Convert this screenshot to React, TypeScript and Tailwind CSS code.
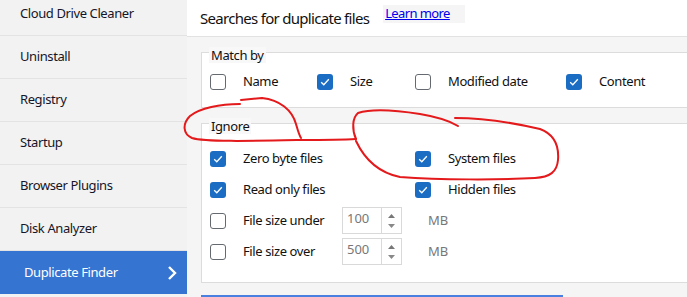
import React from "react";

const FONT = { fontFamily: '"Noto Sans", "Open Sans", sans-serif' };

function Check({ checked }: { checked: boolean }) {
  if (checked) {
    return (
      <div className="w-4 h-4 rounded-[3px] bg-[#1b6dc3] flex items-center justify-center shrink-0">
        <svg width="12" height="12" viewBox="0 0 12 12">
          <polyline points="2.2,6.2 4.8,8.8 9.8,3.2" fill="none" stroke="white" strokeWidth="1.3" />
        </svg>
      </div>
    );
  }
  return <div className="w-4 h-4 rounded-[3px] border-[1.5px] border-[#656a70] bg-white shrink-0" />;
}

function Item({ checked, label, w }: { checked: boolean; label: string; w: string }) {
  return (
    <div className={`flex items-center ${w}`}>
      <Check checked={checked} />
      <span className="ml-[17px] text-[13px] tracking-[-0.4px] text-[#111]">{label}</span>
    </div>
  );
}

function Spin({ value }: { value: string }) {
  return (
    <div className="flex h-[27px] w-[60px] border border-[#d9d9d9] bg-white">
      <div className="flex-1 pl-[4px] pt-[2px] text-[13px] leading-[16px] text-[#777]">{value}</div>
      <div className="w-[20px] border-l border-[#d9d9d9] flex flex-col items-center justify-center gap-[6px]">
        <svg width="7" height="4" viewBox="0 0 7 4"><polygon points="0,4 7,4 3.5,0" fill="#777" /></svg>
        <svg width="7" height="4" viewBox="0 0 7 4"><polygon points="0,0 7,0 3.5,4" fill="#888" /></svg>
      </div>
    </div>
  );
}

const sidebar = [
  "Cloud Drive Cleaner",
  "Uninstall",
  "Registry",
  "Startup",
  "Browser Plugins",
  "Disk Analyzer",
];

export default function App() {
  return (
    <div className="relative w-[687px] h-[297px] overflow-hidden flex bg-[#f5f5f5]" style={FONT}>
      <div className="w-[187px] shrink-0 bg-[#f2f2f2] flex flex-col -mt-[7px]">
        {sidebar.map((s) => (
          <div key={s} className="h-[43px] shrink-0 border-b border-[#e3e3e3] flex items-center pl-[20px] text-[13px] tracking-[-0.4px] text-[#15152a]">
            {s}
          </div>
        ))}
        <div className="h-[43px] shrink-0 bg-[#3574d0] flex items-center pl-[24px] pr-[9px] text-[13px] tracking-[-0.4px] text-white justify-between">
          <span>Duplicate Finder</span>
          <svg width="12" height="16" viewBox="0 0 12 16">
            <polyline points="3,2 9,8 3,14" fill="none" stroke="white" strokeWidth="2.4" />
          </svg>
        </div>
      </div>
      <div className="flex-1 flex flex-col min-w-0">
        <div className="h-[37px] shrink-0 bg-white border-b border-[#e2e2e2] flex items-center pl-[13px]">
          <span className="text-[15px] tracking-[-0.7px] text-[#111]">Searches for duplicate files</span>
          <span className="ml-[14px] mb-[9px] bg-[#f5f5f5] pl-[2px] pr-[15px] h-[18px] flex items-center text-[13px] tracking-[-0.6px] text-[#0000ee] underline">
            Learn more
          </span>
        </div>
        <div className="pl-[14px] pt-[15px] flex flex-col">
          <div className="relative w-[495px] h-[56px] border border-[#dcdcdc] bg-white pl-[8px] pt-[19px]">
            <span className="absolute left-[7px] -top-[6px] px-[2px] bg-[#f8f8f8] text-[13px] tracking-[-0.4px] leading-[16px] text-[#111]">Match by</span>
            <div className="flex">
              <Item checked={false} label="Name" w="w-[107px]" />
              <Item checked={true} label="Size" w="w-[98px]" />
              <Item checked={false} label="Modified date" w="w-[151px]" />
              <Item checked={true} label="Content" w="w-[100px]" />
            </div>
          </div>
          <div className="relative mt-[15px] w-[495px] h-[160px] border border-[#dcdcdc] bg-white pl-[8px] pt-[19px]">
            <span className="absolute left-[7px] -top-[6px] px-[2px] bg-[#f8f8f8] text-[13px] tracking-[-0.4px] leading-[16px] text-[#111]">Ignore</span>
            <div className="grid grid-cols-[205px_1fr] auto-rows-[31px]">
              <Item checked={true} label="Zero byte files" w="" />
              <Item checked={true} label="System files" w="" />
              <Item checked={true} label="Read only files" w="" />
              <Item checked={true} label="Hidden files" w="" />
              <div className="col-span-2 flex items-center">
                <div className="w-[132px] flex items-center"><Check checked={false} /><span className="ml-[17px] text-[13px] tracking-[-0.4px] text-[#111]">File size under</span></div>
                <Spin value="100" />
                <span className="ml-[26px] text-[13px] text-[#777]">MB</span>
              </div>
              <div className="col-span-2 flex items-center">
                <div className="w-[132px] flex items-center"><Check checked={false} /><span className="ml-[17px] text-[13px] tracking-[-0.4px] text-[#111]">File size over</span></div>
                <Spin value="500" />
                <span className="ml-[26px] text-[13px] text-[#777]">MB</span>
              </div>
            </div>
          </div>
          <div className="mt-[12px] h-[3px] w-[362px] bg-[#4a80e0]" />
        </div>
      </div>
      <svg className="absolute left-0 top-0 pointer-events-none" width="687" height="297" viewBox="0 0 687 297">
        <g fill="none" stroke="#e3191b" strokeWidth="2" strokeLinecap="round" strokeLinejoin="round">
          <path d="M241,100 L262,98 C280,100 292,110 296,124 C298,131 299,135 301,138" />
          <path d="M240,104 C220,104 200,108 190,116 C182,124 183,134 192,138 C205,142 250,141 300,140 C320,140 340,140 356,139" />
          <path d="M356,139 C352,130 352,118 358,113 C370,109 395,110 420,114 C438,117 450,121 458,126" />
          <path d="M455,118 C480,118 510,122 540,129 C556,135 559,148 558,160 C557,172 550,177 535,178 C500,180 440,180 400,177 C380,173 365,160 356,141" />
        </g>
      </svg>
    </div>
  );
}
